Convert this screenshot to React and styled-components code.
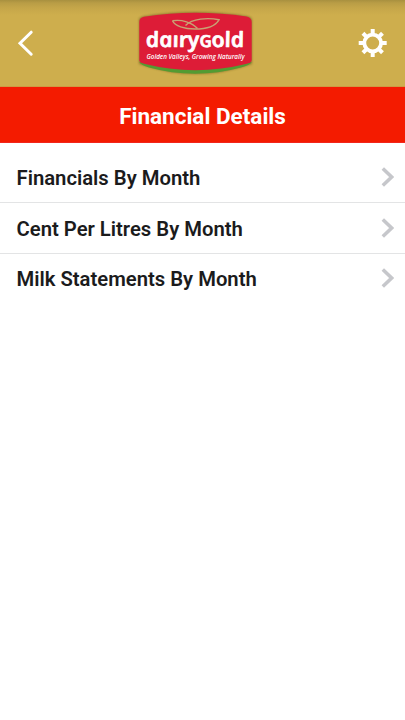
import styled, { createGlobalStyle } from 'styled-components';

const GlobalStyle = createGlobalStyle`
  * {
    box-sizing: border-box;
  }
  body {
    margin: 0;
    background: #fff;
    font-family: Roboto, 'Liberation Sans', sans-serif;
  }
`;
const Screen = styled.div`
  display: flex;
  flex-direction: column;
  min-height: 100vh;
  background: #fff;
`;
const Header = styled.header`
  display: grid;
  grid-template-columns: 59px 1fr 59px;
  height: 87px;
  background: linear-gradient(#a8903f 0, #b99d46 3px, #c5a649 8px, #ceae4d 15px, #ceae4d 100%);
  border-bottom: 1px solid #cf9a42;
`;
const HeaderButton = styled.button`
  display: flex;
  padding: 0;
  border: none;
  background: none;
  color: #fff;
`;
const LogoContainer = styled.div`
  display: flex;
  justify-content: center;
`;
const TitleBar = styled.div`
  display: flex;
  align-items: center;
  justify-content: center;
  height: 56px;
  padding-top: 2px;
  background: #f41b00;
  border-bottom: 1px solid #f2261c;
`;
const Title = styled.h1`
  margin: 0;
  color: #fff;
  font-size: 22.5px;
  font-weight: 700;
  line-height: 28px;
`;
const Menu = styled.ul`
  margin: 0;
  padding: 9px 0 0;
  list-style: none;
`;
const MenuItem = styled.li`
  display: flex;
  align-items: center;
  justify-content: space-between;
  height: ${(props) => props.$height}px;
  padding: 0 11px 0 16.5px;
  border-bottom: 1px solid ${(props) => (props.$last ? 'transparent' : '#e3e4e5')};
  color: #1b1b1c;
  font-size: 20.25px;
  font-weight: 600;
`;
const Label = styled.span`
  padding-top: 2px;
  white-space: nowrap;
`;

const items = [
  { name: 'Financials By Month', height: 51 },
  { name: 'Cent Per Litres By Month', height: 51 },
  { name: 'Milk Statements By Month', height: 49 },
];
const teeth = [0, 45, 90, 135, 180, 225, 270, 315];

function BackIcon() {
  return (
    <svg width="59" height="86" fill="none" stroke="currentColor" strokeWidth="3" strokeLinecap="round">
      <path d="M31.2 32.2 20 43.2 31.2 54.2" />
    </svg>
  );
}

function SettingsIcon() {
  return (
    <svg width="59" height="86" fill="none" stroke="currentColor">
      <circle cx="26.7" cy="43" r="8.4" strokeWidth="3.8" />
      {teeth.map((angle) => (
        <path
          key={angle}
          d={angle % 90 === 0 ? 'M26.7 34V29' : 'M26.7 34V29.2'}
          strokeWidth="4"
          transform={`rotate(${angle} 26.7 43)`}
        />
      ))}
    </svg>
  );
}

function Chevron() {
  return (
    <svg width="13" height="20" fill="none" stroke="#c6c7cb" strokeWidth="3.5">
      <path d="M1.8 1.6 10.6 10 1.8 18.4" />
    </svg>
  );
}

function Logo() {
  return (
    <svg width="145" height="86" viewBox="130 0 145 86">
      <defs>
        <filter id="badgeShadow" x="-10%" y="-20%" width="120%" height="140%">
          <feGaussianBlur stdDeviation="1.3" />
        </filter>
      </defs>
      <path
        d="M139 19Q140 17 145 16Q195 8 247 16Q252 17 252 20V64Q196 84 139 64Z"
        fill="#735d22"
        opacity=".65"
        filter="url(#badgeShadow)"
      />
      <path d="M139.300 62Q195 70 251.700 62Q250 65 241 67.500Q195 80 149 67.500Q141 65 139.300 62Z" fill="#539b32" />
      <path
        d="M139.300 22Q139.300 17.500 144 16.700Q195 9 246.500 16.500Q251.700 17.500 251.700 22V60Q251.700 62.500 247 63.800Q195 76.500 144 63.800Q139.300 62.500 139.300 60Z"
        fill="#dd1c37"
      />
      <g fill="none" stroke="#c8a274" strokeWidth="1.4">
        <path d="M172.500 20.800C175 26 184 29 195 29C208 29 216 25 219 19.800C208 17.500 192 18.500 185.500 25.500" />
        <path d="M172.500 20.800C182 19.300 192 22.500 197.500 28.500" />
      </g>
      <text
        transform="translate(147 47) skewX(12)"
        fill="#fff"
        stroke="#fff"
        strokeWidth=".7"
        strokeLinejoin="round"
        fontFamily="'Open Sans', sans-serif"
        fontSize="21"
        fontStyle="italic"
        fontWeight="600"
        textLength="98.500"
        lengthAdjust="spacingAndGlyphs"
      >
        daıry<tspan fontSize="16.500">G</tspan>old
      </text>
      <text
        x="146.500"
        y="59.300"
        fill="#fff"
        fontFamily="'Open Sans', sans-serif"
        fontSize="7"
        fontStyle="italic"
        fontWeight="600"
        textLength="98"
        lengthAdjust="spacingAndGlyphs"
      >
        Golden Valleys, Growing Naturally
      </text>
    </svg>
  );
}

export default function App() {
  return (
    <Screen>
      <GlobalStyle />
      <Header>
        <HeaderButton aria-label="Back">
          <BackIcon />
        </HeaderButton>
        <LogoContainer>
          <Logo />
        </LogoContainer>
        <HeaderButton aria-label="Settings">
          <SettingsIcon />
        </HeaderButton>
      </Header>
      <TitleBar>
        <Title>Financial Details</Title>
      </TitleBar>
      <Menu>
        {items.map((item) => (
          <MenuItem key={item.name} $height={item.height} $last={item === items[items.length - 1]}>
            <Label>{item.name}</Label>
            <Chevron />
          </MenuItem>
        ))}
      </Menu>
    </Screen>
  );
}
